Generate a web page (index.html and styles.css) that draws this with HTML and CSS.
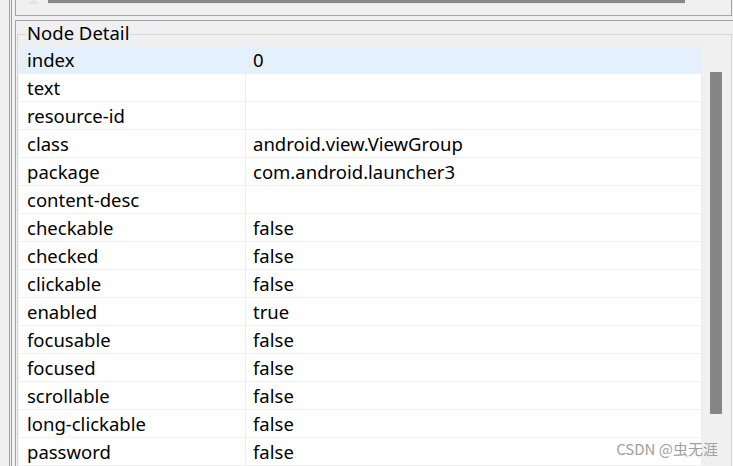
FILE: index.html
```html
<!DOCTYPE html>
<html>
<head>
<meta charset="utf-8">
<link rel="stylesheet" href="styles.css">
</head>
<body>
<div class="window">
  <div class="edge">
    <div class="edge-inner">
      <div class="panel panel-top">
        <div class="hbar-arrow"></div>
        <div class="hbar"></div>
      </div>
      <div class="panel panel-main">
        <div class="group">
          <span class="legend">Node Detail</span>
          <div class="table-wrap">
            <div class="table">
              <div class="row selected"><div class="cell name">index</div><div class="cell value">0</div></div>
              <div class="row"><div class="cell name">text</div><div class="cell value"></div></div>
              <div class="row"><div class="cell name">resource-id</div><div class="cell value"></div></div>
              <div class="row"><div class="cell name">class</div><div class="cell value">android.view.ViewGroup</div></div>
              <div class="row"><div class="cell name">package</div><div class="cell value">com.android.launcher3</div></div>
              <div class="row"><div class="cell name">content-desc</div><div class="cell value"></div></div>
              <div class="row"><div class="cell name">checkable</div><div class="cell value">false</div></div>
              <div class="row"><div class="cell name">checked</div><div class="cell value">false</div></div>
              <div class="row"><div class="cell name">clickable</div><div class="cell value">false</div></div>
              <div class="row"><div class="cell name">enabled</div><div class="cell value">true</div></div>
              <div class="row"><div class="cell name">focusable</div><div class="cell value">false</div></div>
              <div class="row"><div class="cell name">focused</div><div class="cell value">false</div></div>
              <div class="row"><div class="cell name">scrollable</div><div class="cell value">false</div></div>
              <div class="row"><div class="cell name">long-clickable</div><div class="cell value">false</div></div>
              <div class="row"><div class="cell name">password</div><div class="cell value">false</div></div>
            </div>
            <div class="vscroll"><div class="thumb"></div></div>
          </div>
        </div>
      </div>
    </div>
  </div>
</div>
<div class="watermark">CSDN @虫无涯</div>
</body>
</html>
```
FILE: styles.css
```css
html, body {
  margin: 0;
  padding: 0;
  height: 466px;
  overflow: hidden;
  background: #f0f0f0;
  font-family: "Noto Sans", "Open Sans", sans-serif;
  font-size: 18.5px;
  color: #000;
}
.window {
  padding-left: 9px;
  height: 466px;
}
.edge {
  border-left: 1px solid #a0a0a0;
  padding-left: 1px;
  height: 466px;
}
.edge-inner {
  border-left: 1px solid #a0a0a0;
  padding-left: 3px;
  height: 466px;
  display: flex;
  flex-direction: column;
  gap: 4px;
  overflow: hidden;
}
.panel {
  width: 715px;
  border: 1px solid #a3a3ab;
  background: #f0f0f0;
  flex-shrink: 0;
}
.panel-top {
  border-top: none;
  height: 15px;
  position: relative;
  display: flex;
}
.hbar {
  margin-left: 32px;
  width: 637px;
  height: 3px;
  background: #898989;
  border-bottom: 1px solid #e4e4e4;
}
.hbar-arrow {
  position: absolute;
  left: 12px;
  top: 0;
  width: 0;
  height: 0;
  border-left: 6px solid transparent;
  border-right: 6px solid transparent;
  border-bottom: 4px solid #e2e2e2;
}
.panel-main {
  border-bottom: none;
  padding: 13px 1px 0 1px;
}
.group {
  position: relative;
  border: 1px solid #d8d8d8;
  border-bottom: none;
  padding: 11px 0 0 1px;
}
.legend {
  position: absolute;
  left: 8px;
  top: -12px;
  padding: 0 1px;
  line-height: 20px;
  background: #f0f0f0;
  color: #000;
}
.table-wrap {
  display: flex;
}
.table {
  width: 682px;
  background: #fff;
  border-right: 1px solid #e3effa;
}
.row {
  display: grid;
  grid-template-columns: 227px 1fr;
  height: 27px;
  border-bottom: 1px solid #f0f0f0;
}
.row.selected {
  background: #e4f1fc;
  border-bottom-color: #e4f1fc;
}
.cell {
  line-height: 27px;
  white-space: nowrap;
  overflow: hidden;
}
.name {
  padding-left: 8px;
  border-right: 1px solid #e8eef6;
}
.value {
  padding-left: 7px;
}
.vscroll {
  width: 27px;
  padding-left: 8px;
  box-sizing: border-box;
}
.thumb {
  margin-top: 26px;
  width: 12px;
  height: 342px;
  background: #858585;
}
.watermark {
  position: absolute;
  right: 15px;
  top: 439px;
  font-family: "Noto Sans CJK SC", "Noto Sans", sans-serif;
  font-size: 15px;
  line-height: 20px;
  color: #a0a0a0;
}
```
